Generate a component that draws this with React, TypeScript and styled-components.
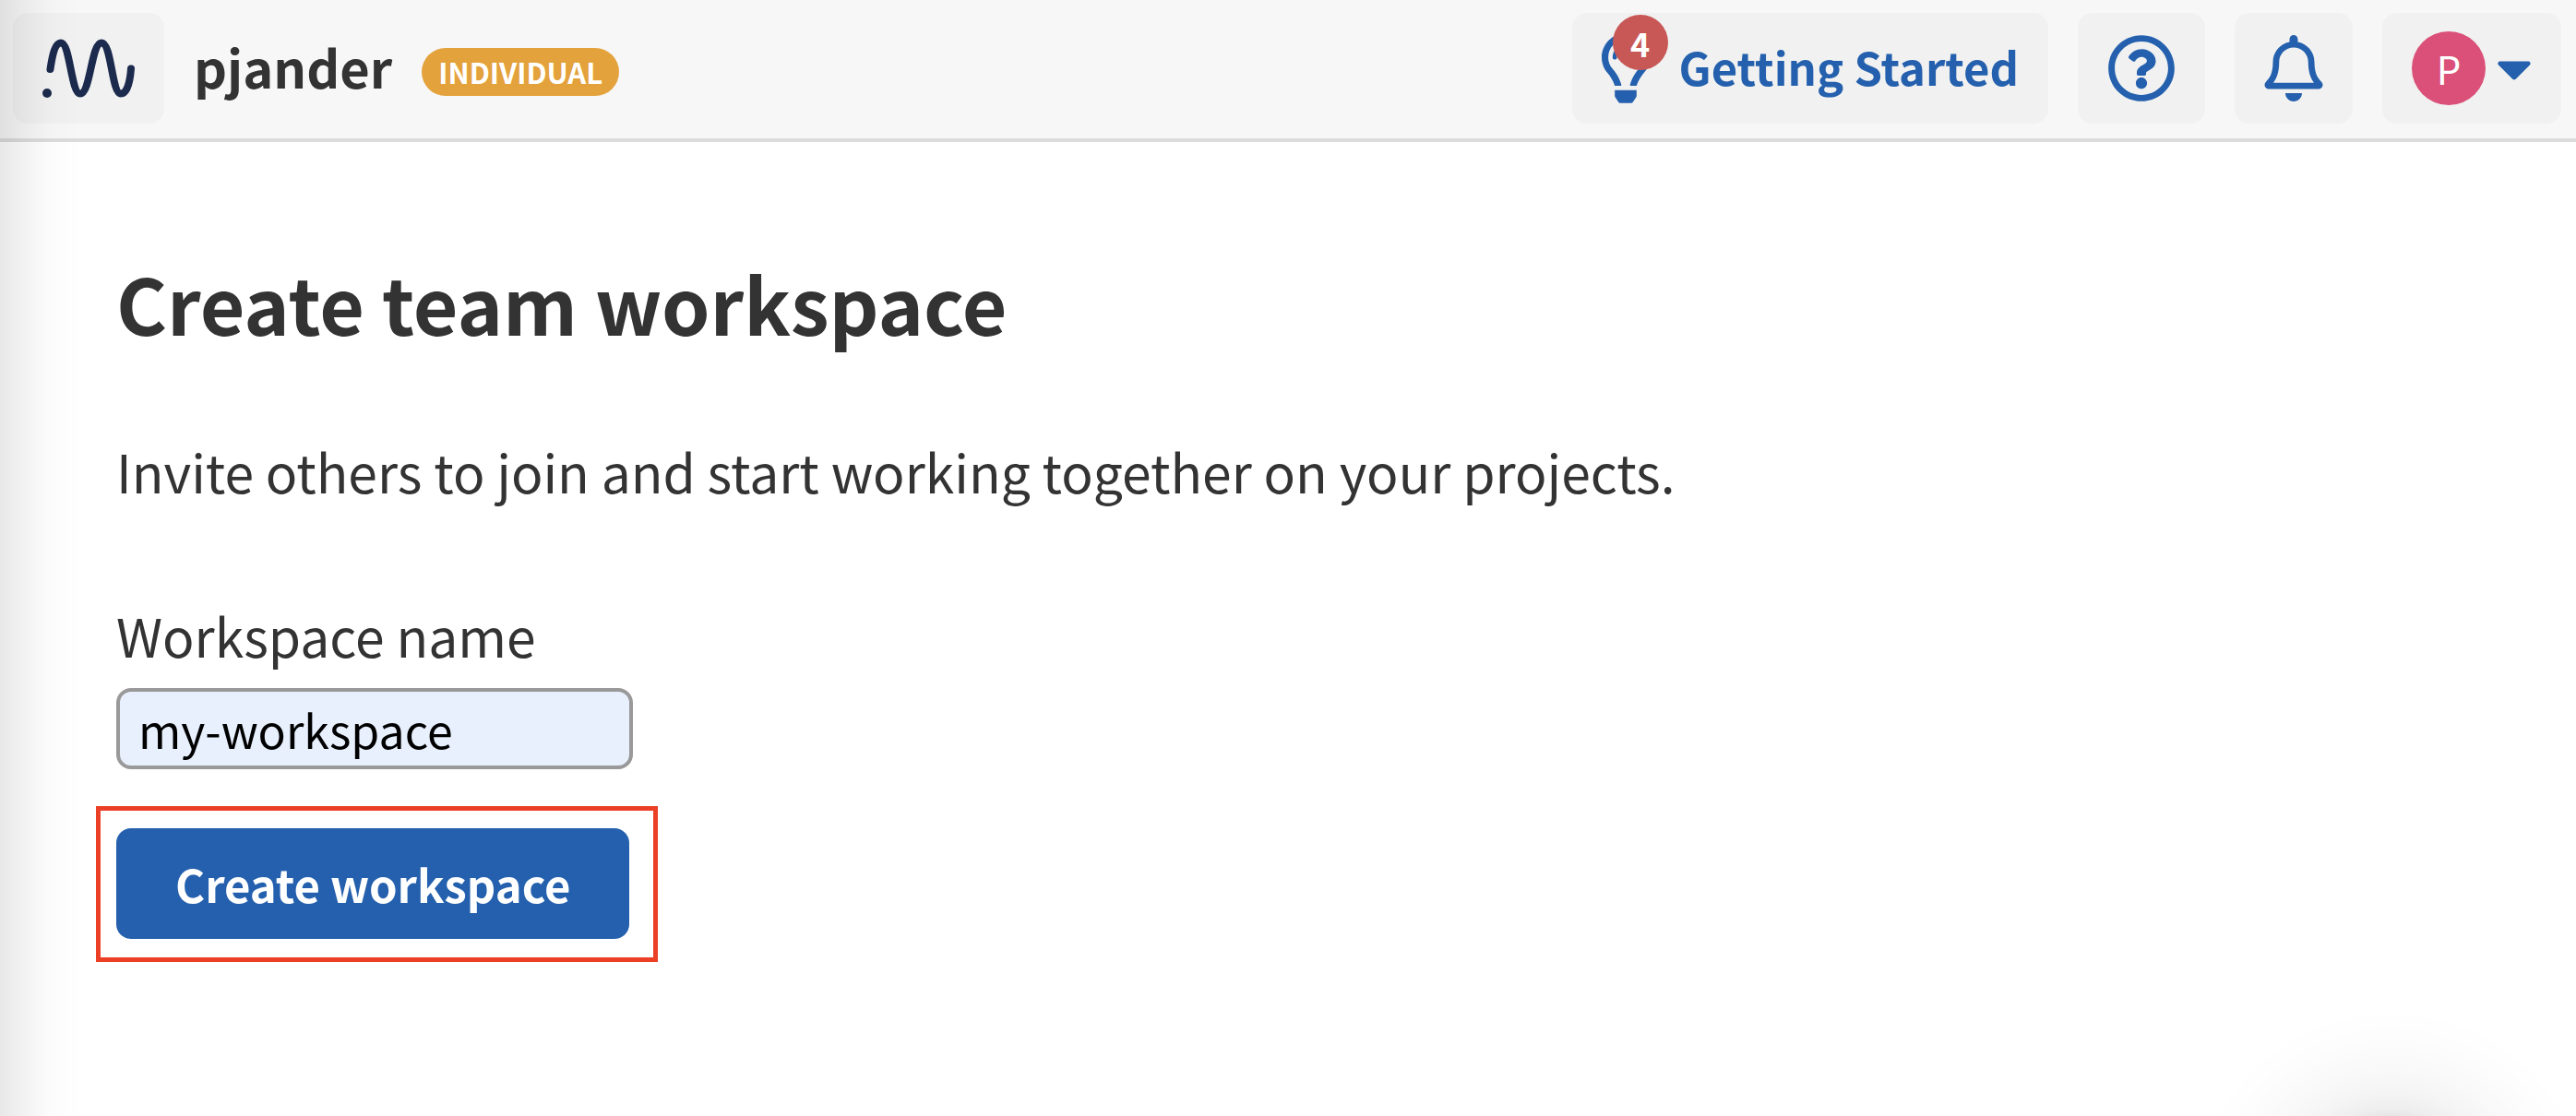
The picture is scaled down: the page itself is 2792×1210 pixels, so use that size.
import React from "react";
import styled, { createGlobalStyle } from "styled-components";
import {
  FaCaretDown,
  FaRegBell,
  FaRegLightbulb,
  FaRegQuestionCircle,
} from "react-icons/fa";

const blue = "#2460ad";
const ink = "#333333";

const GlobalStyle = createGlobalStyle`
  * {
    box-sizing: border-box;
  }
  body {
    margin: 0;
    min-height: 100vh;
    background: #ffffff;
    color: ${ink};
    font-family: "Noto Sans CJK SC", "Noto Sans", sans-serif;
    font-size: 57px;
    line-height: 80px;
  }
  button, input {
    font-family: inherit;
  }
`;

const Header = styled.header`
  display: flex;
  align-items: center;
  justify-content: space-between;
  padding: 14px 16px 16px 14px;
  background: #f7f7f7;
  border-bottom: 4px solid #dcdcdc;
`;

const HeaderGroup = styled.div`
  display: flex;
  align-items: center;
  gap: 32px;
`;

const LogoLink = styled.a`
  display: flex;
  align-items: center;
  justify-content: center;
  width: 164px;
  height: 120px;
  border-radius: 16px;
  background: #f1f1f1;
`;

const AccountName = styled.span`
  padding-bottom: 5px;
  font-size: 56px;
  font-weight: 600;
`;

const Plan = styled.span`
  margin-top: 8px;
  padding: 0 18px;
  border-radius: 26px;
  background: #e4a23c;
  color: #ffffff;
  font-size: 31px;
  font-weight: 700;
  line-height: 52px;
`;

const Tile = styled.button<{ $gap?: number }>`
  position: relative;
  display: flex;
  align-items: center;
  gap: ${({ $gap = 0 }) => $gap}px;
  height: 120px;
  padding: 0 32px;
  border: 0;
  border-radius: 16px;
  background: #f1f1f1;
  color: ${blue};
  cursor: pointer;
`;

const TileLabel = styled.span`
  padding-bottom: 5px;
  font-size: 49px;
  font-weight: 600;
  line-height: 80px;
`;

const Icon = styled.span<{ $width: number; $height: number }>`
  display: flex;
  svg {
    width: ${({ $width }) => $width}px;
    height: ${({ $height }) => $height}px;
  }
`;

const Count = styled.span`
  position: absolute;
  top: 2px;
  left: 44px;
  width: 60px;
  height: 60px;
  border-radius: 50%;
  background: #c85856;
  color: #ffffff;
  font-size: 36px;
  font-weight: 700;
  line-height: 60px;
  text-align: center;
`;

const Avatar = styled.span`
  width: 80px;
  height: 80px;
  border-radius: 50%;
  background: #da5078;
  color: #ffffff;
  font-size: 42px;
  font-weight: 400;
  line-height: 80px;
  text-align: center;
`;

const Main = styled.main`
  padding: 124px 126px 160px;
`;

const Title = styled.h1`
  margin: 0;
  font-size: 84px;
  font-weight: 600;
  line-height: 100px;
`;

const Intro = styled.p`
  margin: 92px 0 98px;
`;

const Form = styled.form`
  display: flex;
  flex-direction: column;
  align-items: flex-start;
`;

const Label = styled.label`
  margin-bottom: 18px;
`;

const TextInput = styled.input`
  width: 560px;
  height: 88px;
  padding: 0 20px;
  border: 4px solid #999999;
  border-radius: 16px;
  background: #e8f0fd;
  color: #000000;
  font-size: 50px;
  outline: none;
`;

const Highlight = styled.div`
  margin: 40px 0 0 -22px;
  padding: 19px 26px 20px 17px;
  border: 5px solid #ec4026;
`;

const SubmitButton = styled.button`
  display: block;
  height: 120px;
  padding: 0 64px;
  border: 0;
  border-radius: 16px;
  background: ${blue};
  color: #ffffff;
  font-size: 49px;
  font-weight: 700;
  line-height: 80px;
  cursor: pointer;
`;

const EdgeShade = styled.div`
  position: fixed;
  inset: 0 auto 0 0;
  width: 90px;
  pointer-events: none;
  background: linear-gradient(
    to right,
    rgba(0, 0, 0, 0.09),
    rgba(0, 0, 0, 0.06) 22%,
    rgba(0, 0, 0, 0.035) 40%,
    rgba(0, 0, 0, 0.012) 62%,
    rgba(0, 0, 0, 0)
  );
`;

const CornerShade = styled.div`
  position: fixed;
  right: 0;
  bottom: 0;
  width: 440px;
  height: 120px;
  pointer-events: none;
  background: radial-gradient(
    circle 220px at 240px 222px,
    rgba(0, 0, 0, 0.1) 46%,
    rgba(0, 0, 0, 0.065) 50%,
    rgba(0, 0, 0, 0.04) 59%,
    rgba(0, 0, 0, 0.022) 70%,
    rgba(0, 0, 0, 0.008) 86%,
    rgba(0, 0, 0, 0)
  );
`;

function Logo() {
  return (
    <svg width="100" height="64" viewBox="0 0 100 64" aria-hidden="true">
      <circle cx="5" cy="59" r="5" fill="#1c2b4d" />
      <path
        d="M8.5 33C11 16 14 4.500 20 4.500C30 4.500 31 59.500 41 59.500C52 59.500 53 4.500 64 4.500C75 4.500 75 59.500 85 59.500C92 59.500 95 46 96 32.500"
        fill="none"
        stroke="#1c2b4d"
        strokeWidth="8"
        strokeLinecap="round"
      />
    </svg>
  );
}

export default function App() {
  return (
    <>
      <GlobalStyle />
      <Header>
        <HeaderGroup>
          <LogoLink href="#" aria-label="Home">
            <Logo />
          </LogoLink>
          <AccountName>pjander</AccountName>
          <Plan>INDIVIDUAL</Plan>
        </HeaderGroup>
        <HeaderGroup>
          <Tile type="button" $gap={32}>
            <Icon $width={52} $height={76}>
              <FaRegLightbulb />
            </Icon>
            <TileLabel>Getting Started</TileLabel>
            <Count>4</Count>
          </Tile>
          <Tile type="button" aria-label="Help">
            <Icon $width={74} $height={74}>
              <FaRegQuestionCircle />
            </Icon>
          </Tile>
          <Tile type="button" aria-label="Notifications">
            <Icon $width={64} $height={72}>
              <FaRegBell />
            </Icon>
          </Tile>
          <Tile type="button" $gap={12} aria-label="Profile menu">
            <Avatar>P</Avatar>
            <Icon $width={38} $height={64}>
              <FaCaretDown />
            </Icon>
          </Tile>
        </HeaderGroup>
      </Header>
      <Main>
        <Title>Create team workspace</Title>
        <Intro>
          Invite others to join and start working together on your projects.
        </Intro>
        <Form onSubmit={(event) => event.preventDefault()}>
          <Label htmlFor="workspace-name">Workspace name</Label>
          <TextInput
            id="workspace-name"
            type="text"
            defaultValue="my-workspace"
          />
          <Highlight>
            <SubmitButton type="submit">Create workspace</SubmitButton>
          </Highlight>
        </Form>
      </Main>
      <EdgeShade />
      <CornerShade />
    </>
  );
}
